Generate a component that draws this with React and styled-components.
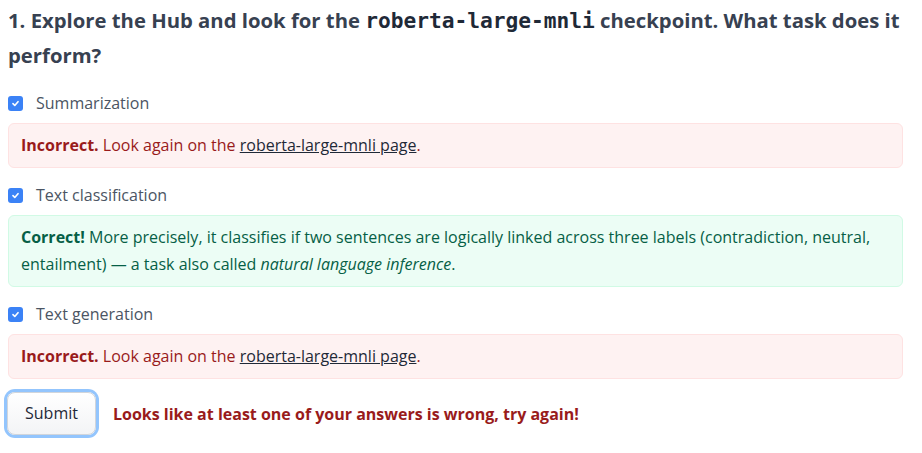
import styled, { createGlobalStyle } from 'styled-components'

const GlobalStyle = createGlobalStyle`
  body {
    margin: 0;
    background: #ffffff;
    font-family: "Source Sans Pro", "Open Sans", "Noto Sans", sans-serif;
  }
`

const Page = styled.div`
  padding: 3px 19px 0 8px;
`

const Question = styled.h3`
  margin: 0 0 18px;
  font-size: 20.3px;
  line-height: 35px;
  font-weight: 700;
  color: #374151;

  code {
    font-family: "DejaVu Sans Mono", "Liberation Mono", monospace;
    font-size: 21.2px;
    font-weight: 700;
    color: #1f2937;
  }
`

const Options = styled.div`
  display: flex;
  flex-direction: column;
  gap: 15px;
`

const Option = styled.div`
  display: flex;
  flex-direction: column;
  gap: 8px;
`

const Choice = styled.label`
  display: flex;
  align-items: center;
  gap: 13px;
  height: 24px;
  font-size: 16px;
  color: #4b5563;
`

const Box = styled.span`
  width: 15px;
  height: 15px;
  border-radius: 3px;
  background: #3b82f6;
  display: flex;
  align-items: center;
  justify-content: center;
  flex-shrink: 0;
`

const Feedback = styled.div`
  padding: 8px 12px;
  border-radius: 6px;
  font-size: 16px;
  line-height: 27px;
  border: 1px solid ${(p) => (p.$correct ? '#d1fae5' : '#fee2e2')};
  background: ${(p) => (p.$correct ? '#ecfdf5' : '#fef2f2')};
  color: ${(p) => (p.$correct ? '#065f46' : '#991b1b')};

  strong {
    font-weight: 700;
  }

  a {
    color: #1f2937;
    text-decoration: underline;
  }
`

const Actions = styled.div`
  display: flex;
  align-items: center;
  gap: 17px;
  margin-top: 13px;
  padding-bottom: 4px;
`

const SubmitButton = styled.button`
  margin-left: -1px;
  padding: 10px 17px;
  border: 1px solid #d1d5db;
  border-radius: 8px;
  background: linear-gradient(to bottom, #ffffff, #f3f4f6);
  box-shadow: 0 0 0 3px #93c5fd;
  font-family: inherit;
  font-size: 16px;
  line-height: 21px;
  color: #1f2937;
  cursor: pointer;
`

const Verdict = styled.span`
  font-size: 16px;
  font-weight: 700;
  color: #991b1b;
`

function Check() {
  return (
    <Box>
      <svg width="9" height="9" viewBox="0 0 10 10" fill="none" stroke="#fff" strokeWidth="1.8" strokeLinecap="round" strokeLinejoin="round">
        <path d="M2.2 5.2 4.2 7.2 7.8 3" />
      </svg>
    </Box>
  )
}

function Wrong() {
  return (
    <Feedback>
      <strong>Incorrect.</strong> Look again on the <a href="#">roberta-large-mnli page</a>.
    </Feedback>
  )
}

export default function App() {
  return (
    <>
      <GlobalStyle />
      <Page>
        <Question>
          1. Explore the Hub and look for the <code>roberta-large-mnli</code> checkpoint. What task does it perform?
        </Question>
        <Options>
          <Option>
            <Choice><Check />Summarization</Choice>
            <Wrong />
          </Option>
          <Option>
            <Choice><Check />Text classification</Choice>
            <Feedback $correct>
              <strong>Correct!</strong> More precisely, it classifies if two sentences are logically linked across three labels (contradiction, neutral, entailment) — a task also called <em>natural language inference</em>.
            </Feedback>
          </Option>
          <Option>
            <Choice><Check />Text generation</Choice>
            <Wrong />
          </Option>
        </Options>
        <Actions>
          <SubmitButton>Submit</SubmitButton>
          <Verdict>Looks like at least one of your answers is wrong, try again!</Verdict>
        </Actions>
      </Page>
    </>
  )
}
